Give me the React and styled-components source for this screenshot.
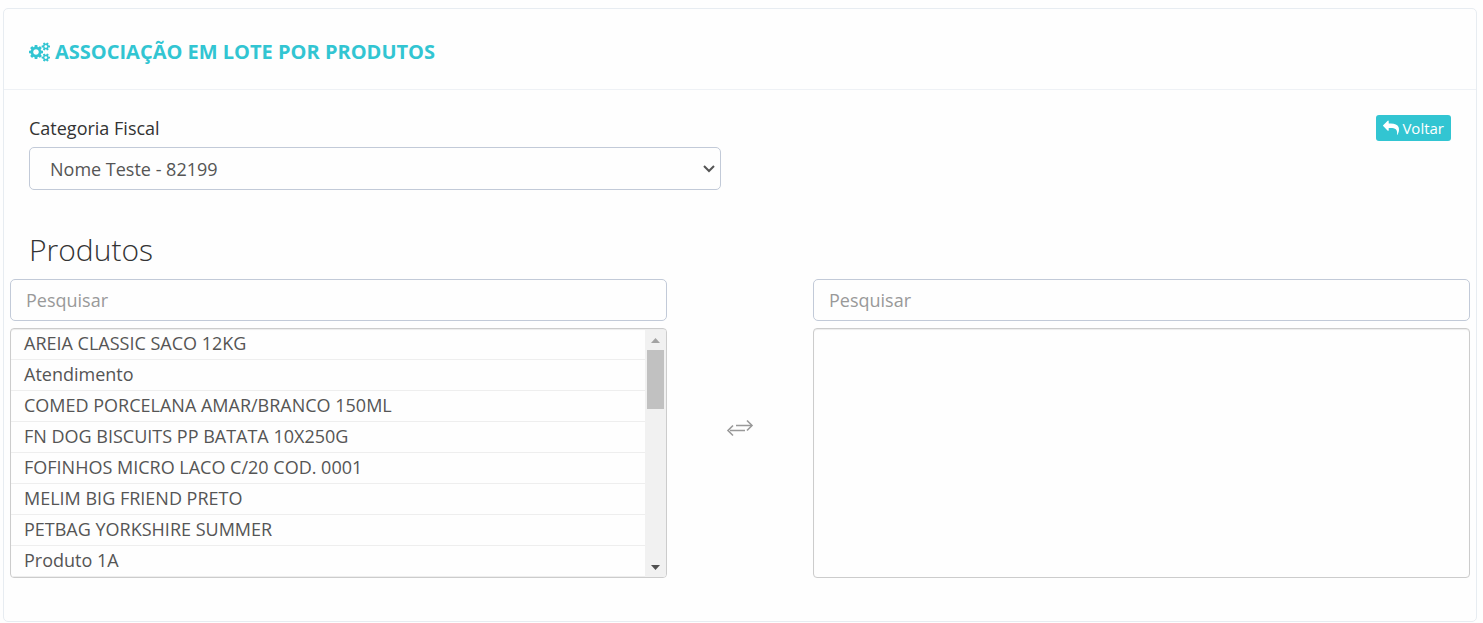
import React, { useRef, useState } from 'react';
import styled, { createGlobalStyle } from 'styled-components';

const produtos = [
  'AREIA CLASSIC SACO 12KG',
  'Atendimento',
  'COMED PORCELANA AMAR/BRANCO 150ML',
  'FN DOG BISCUITS PP BATATA 10X250G',
  'FOFINHOS MICRO LACO C/20 COD. 0001',
  'MELIM BIG FRIEND PRETO',
  'PETBAG YORKSHIRE SUMMER',
  'Produto 1A',
];

const smallGear =
  'v140q0 16-149 31-12 27-30 52 51 113 51 138 0 4-4 7-122 71-124 71-8 0-46-47t-52-68q-20 2-30 2t-30-2q-14 21-52 68t-46 47q-2 0-124-71-4-3-4-7 0-25 51-138-18-25-30-52-149-15-149-31v-140q0-16 149-31 13-29 30-52-51-113-51-138 0-4 4-7 4-2 35-20t59-34 30-16q8 0 46 46.5t52 67.5q20-2 30-2t30 2q51-71 92-112l6-2q4 0 124 70 4 3 4 7 0 25-51 138 17 23 30 52 149 15 149 31z';

const CogsIcon = () => (
  <svg width="21" height="20" viewBox="0 0 1920 1792" fill="currentColor" aria-hidden="true">
    <path d="M896 896q0-106-75-181t-181-75-181 75-75 181 75 181 181 75 181-75 75-181zm384-91v185q0 10-7 19.5t-16 10.5l-155 24q-11 35-32 76 34 48 90 115 7 11 7 20 0 12-7 19-23 30-82.5 89.500t-78.500 59.500q-11 0-21-7l-115-90q-37 19-77 31-11 108-23 155-7 24-30 24h-186q-11 0-20-7.500t-10-17.500l-23-153q-34-10-75-31l-118 89q-7 7-20 7-11 0-21-8-144-133-144-160 0-9 7-19 10-14 41-53t47-61q-23-44-35-82l-152-24q-10-1-17-9.500t-7-19.500v-185q0-10 7-19.500t16-10.500l155-24q11-35 32-76-34-48-90-115-7-11-7-20 0-12 7-20 22-30 82-89t79-59q11 0 21 7l115 90q34-18 77-32 11-108 23-154 7-24 30-24h186q11 0 20 7.500t10 17.500l23 153q34 10 75 31l118-89q8-7 20-7 11 0 21 8 144 133 144 160 0 8-7 19-12 16-42 54t-45 60q23 48 34 82l152 23q10 2 17 10.500t7 19.500z" />
    <path d={`M1664 1408q0-52-38-90t-90-38-90 38-38 90q0 53 37.500 90.500t90.500 37.500 90.500-37.500 37.500-90.500zM1920 1338${smallGear}`} />
    <path d={`M1664 384q0-52-38-90t-90-38-90 38-38 90q0 53 37.500 90.500t90.500 37.500 90.500-37.500 37.500-90.500zM1920 314${smallGear}`} />
  </svg>
);

const ReplyIcon = () => (
  <svg width="16" height="16" viewBox="0 0 1792 1792" fill="currentColor" aria-hidden="true">
    <path
      transform="translate(1792 0) scale(-1 1)"
      d="M1792 640q0 26-19 45l-512 512q-19 19-45 19t-45-19-19-45v-256h-224q-98 0-175.500 6t-154 21.500-133 42.500-105.500 69.500-80 101-48.500 138.500-17.500 181q0 55 5 123 0 6 2.500 23.500t2.500 26.500q0 15-8.500 25t-23.500 10q-16 0-28-17-7-9-13-22t-13.500-30-10.500-24q-127-285-127-451 0-199 53-333 162-403 875-403h224v-256q0-26 19-45t45-19 45 19l512 512q19 19 19 45z"
    />
  </svg>
);

const TransferIcon = () => (
  <svg width="28" height="18" viewBox="0 0 28 18" fill="none" stroke="#999" aria-hidden="true">
    <path d="M10 6.500H26M4 11.500H19" strokeWidth="1.300" />
    <path d="M21 1.500L26 6.500L21 11.500M7 6.500L2 11.500L7 16.500" strokeWidth="1.600" />
  </svg>
);

const ROW_HEIGHT = 31;

const Scrollbar = ({ listRef }) => {
  const scroll = (rows) => listRef.current.scrollBy({ top: rows * ROW_HEIGHT });

  return (
    <ScrollTrack>
      <ScrollButton type="button" aria-label="Rolar para cima" $muted onClick={() => scroll(-1)}>
        <svg width="9" height="5" viewBox="0 0 9 5" fill="currentColor">
          <path d="M0 5L4.500 0L9 5z" />
        </svg>
      </ScrollButton>
      <ScrollThumb />
      <ScrollButton type="button" aria-label="Rolar para baixo" onClick={() => scroll(1)}>
        <svg width="9" height="5" viewBox="0 0 9 5" fill="currentColor">
          <path d="M0 0L4.500 5L9 0z" />
        </svg>
      </ScrollButton>
    </ScrollTrack>
  );
};

const DualListColumn = ({ items, label }) => {
  const [search, setSearch] = useState('');
  const listRef = useRef(null);
  const visible = items.filter((i) => i.toLowerCase().includes(search.toLowerCase()));

  return (
    <ListColumn>
      <SearchInput
        type="text"
        placeholder="Pesquisar"
        aria-label={`Pesquisar ${label}`}
        value={search}
        onChange={(e) => setSearch(e.target.value)}
      />
      <ListBox>
        <List ref={listRef} aria-label={label}>
          {visible.map((item) => (
            <ListItem key={item}>{item}</ListItem>
          ))}
        </List>
        {items.length > 0 && <Scrollbar listRef={listRef} />}
      </ListBox>
    </ListColumn>
  );
};

const App = () => {
  const [categoria, setCategoria] = useState('82199');

  return (
    <>
      <GlobalStyle />
      <Card>
        <CardHeader>
          <Title>
            <CogsIcon />
            Associação em lote por produtos
          </Title>
        </CardHeader>

        <CardBody>
          <TopRow>
            <Field>
              <Label htmlFor="categoria">Categoria Fiscal</Label>
              <SelectWrapper>
                <Select id="categoria" value={categoria} onChange={(e) => setCategoria(e.target.value)}>
                  <option value="82199">Nome Teste - 82199</option>
                </Select>
                <Chevron viewBox="0 0 12 8" aria-hidden="true">
                  <path d="M1 1L6 6L11 1" />
                </Chevron>
              </SelectWrapper>
            </Field>
            <BackButton type="button">
              <ReplyIcon />
              Voltar
            </BackButton>
          </TopRow>

          <SectionTitle>Produtos</SectionTitle>

          <DualList>
            <DualListColumn items={produtos} label="Produtos disponíveis" />
            <Transfer>
              <TransferIcon />
            </Transfer>
            <DualListColumn items={[]} label="Produtos associados" />
          </DualList>
        </CardBody>
      </Card>
    </>
  );
};

const GlobalStyle = createGlobalStyle`
  * {
    box-sizing: border-box;
  }

  body {
    margin: 0;
    padding: 8px 6px 0 3px;
    background: #fefefe;
    color: #333;
    font-family: "Open Sans", sans-serif;
    font-size: 18px;
  }
`;

const Card = styled.main`
  border: 1px solid #e7ecf1;
  border-radius: 5px;
  background: #fefefe;
`;

const CardHeader = styled.header`
  padding: 29px 25px 24px;
  border-bottom: 1px solid #eef1f5;
`;

const Title = styled.h1`
  display: flex;
  align-items: center;
  gap: 5px;
  margin: 0;
  font-size: 20px;
  line-height: 27px;
  font-weight: 700;
  text-transform: uppercase;
  color: #32c5d2;
`;

const CardBody = styled.div`
  padding: 25px 6px 43px;
`;

const TopRow = styled.div`
  display: grid;
  grid-template-columns: 1fr 1fr;
  column-gap: 38px;
  align-items: start;
  padding: 0 19px;
`;

const Field = styled.div`
  display: flex;
  flex-direction: column;
  gap: 5px;
`;

const Label = styled.label`
  line-height: 27px;
`;

const SelectWrapper = styled.div`
  position: relative;
`;

const Select = styled.select`
  display: block;
  appearance: none;
  width: 100%;
  height: 43px;
  padding: 6px 20px;
  border: 1px solid #c2cad8;
  border-radius: 5px;
  background: #fefefe;
  color: #555;
  font: inherit;
`;

const Chevron = styled.svg`
  position: absolute;
  top: 18px;
  right: 6px;
  width: 12px;
  height: 8px;
  fill: none;
  stroke: #555;
  stroke-width: 2;
  pointer-events: none;
`;

const BackButton = styled.button`
  justify-self: end;
  display: flex;
  align-items: center;
  gap: 3px;
  height: 26px;
  padding: 0 7px;
  border: none;
  border-radius: 3px;
  background: #32c5d2;
  color: #fff;
  font-family: inherit;
  font-size: 15px;
  cursor: pointer;

  &:hover {
    background: #26a1ab;
  }
`;

const SectionTitle = styled.h2`
  margin: 40px 19px 10px;
  font-size: 30px;
  line-height: 39px;
  font-weight: 300;
`;

const DualList = styled.div`
  display: grid;
  grid-template-columns: 45fr 10fr 45fr;
`;

const ListColumn = styled.div`
  display: flex;
  flex-direction: column;
  gap: 7px;
  min-width: 0;
`;

const SearchInput = styled.input`
  width: 100%;
  height: 42px;
  padding: 6px 15px;
  border: 1px solid #c2cad8;
  border-radius: 5px;
  background: #fefefe;
  color: #555;
  font: inherit;

  &::placeholder {
    color: #999;
  }
`;

const ListBox = styled.div`
  display: flex;
  height: 250px;
  border: 1px solid #ccc;
  border-radius: 4px;
  box-shadow: inset 0 1px 1px rgba(0, 0, 0, 0.075);
  overflow: hidden;
`;

const List = styled.ul`
  flex: 1;
  min-width: 0;
  margin: 0;
  padding: 0;
  list-style: none;
  overflow-y: auto;
  scrollbar-width: none;
`;

const ListItem = styled.li`
  height: ${ROW_HEIGHT}px;
  padding: 0 13px;
  border-bottom: 1px solid #eee;
  line-height: 29px;
  color: #555;
  white-space: nowrap;
`;

const ScrollTrack = styled.div`
  display: flex;
  flex-direction: column;
  width: 21px;
  margin-top: 1px;
  padding: 0 2px;
  background: #f1f1f1;
`;

const ScrollButton = styled.button`
  display: flex;
  align-items: center;
  justify-content: center;
  height: 20px;
  padding: 0;
  border: none;
  background: none;
  color: ${(props) => (props.$muted ? '#a3a3a3' : '#505050')};

  &:last-child {
    margin-top: auto;
  }
`;

const ScrollThumb = styled.div`
  height: 59px;
  background: #c1c1c1;
`;

const Transfer = styled.div`
  display: flex;
  align-items: center;
  justify-content: center;
  padding-bottom: 2px;
`;

export default App;
